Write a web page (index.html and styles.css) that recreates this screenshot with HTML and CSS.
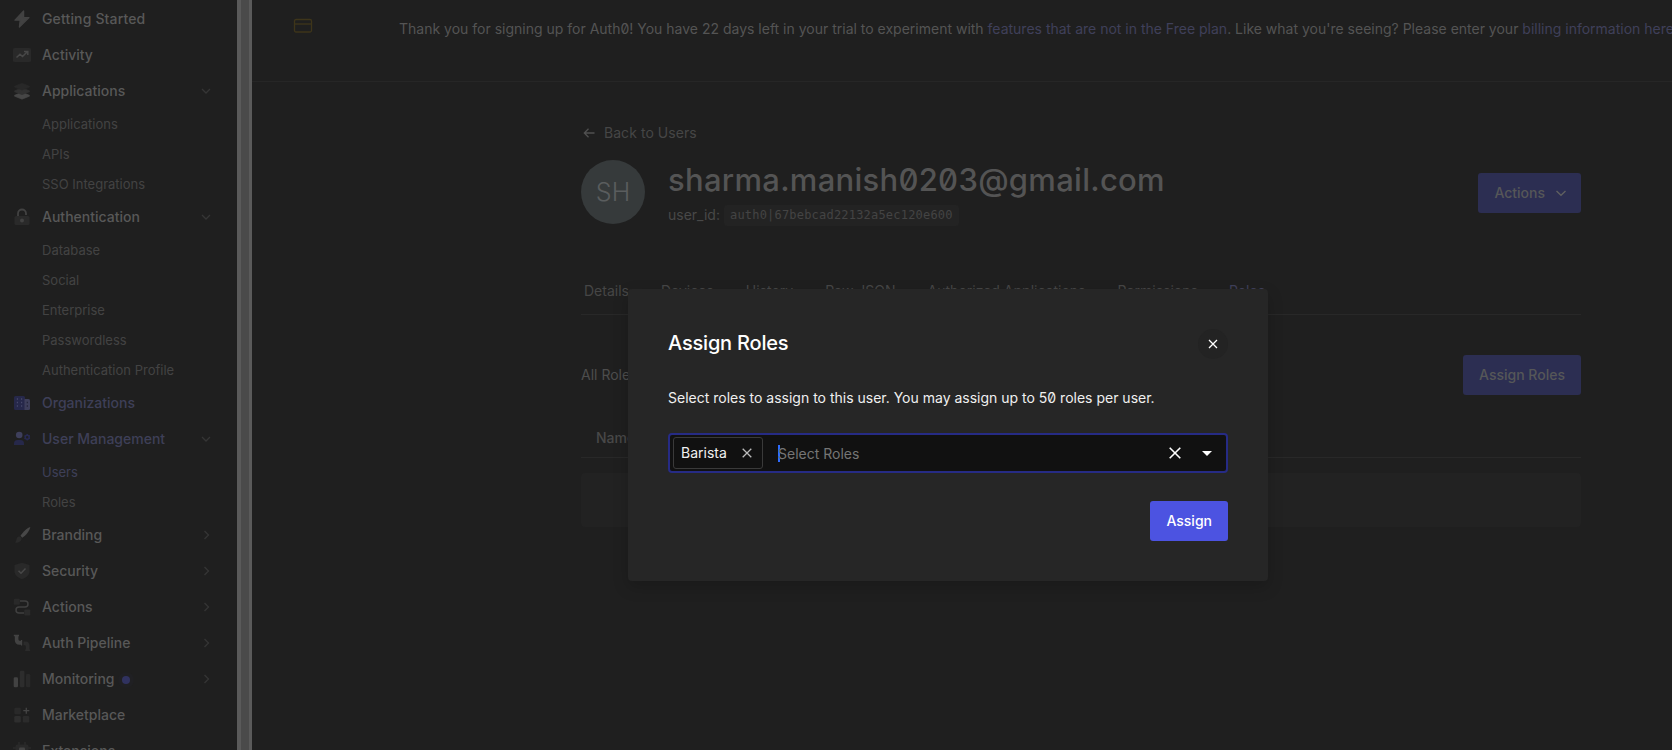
FILE: index.html
```html
<!DOCTYPE html>
<html lang="en">
<head>
<meta charset="utf-8">
<title>User Details</title>
<link rel="stylesheet" href="styles.css">
</head>
<body>
<div class="app">
  <nav class="sidebar">
    <a class="item first"><svg class="ico" viewBox="0 0 18 18"><path d="M10.6 1 2 10.2h5.2L6.4 17 16 7.6h-5.400z" fill="#424242" stroke="#424242" stroke-linejoin="round"/></svg><span>Getting Started</span></a>
    <a class="item"><svg class="ico" viewBox="0 0 18 18"><rect y="2" width="18" height="14" rx="1.500" fill="#292929"/><path d="M3.500 11.500 7 8.200l2.500 2.300 4.800-4.800M11 5.500h3.800v3.600" fill="none" stroke="#484848" stroke-width="1.500"/></svg><span>Activity</span></a>
    <a class="item"><svg class="ico" viewBox="0 0 18 18"><path d="M1.500 13.300 9 10.300l7.500 3v.9L9 17.200l-7.500-3z" fill="#464646" stroke="#464646" stroke-width=".6" stroke-linejoin="round"/><path d="M1.500 8.800 9 6l7.500 2.800v.9L9 12.700 1.500 9.700z" fill="#313131" stroke="#313131" stroke-width=".6" stroke-linejoin="round"/><path d="M1.500 4.200 9 1.200l7.500 3v.9L9 8.100l-7.500-3z" fill="#282828" stroke="#282828" stroke-width=".6" stroke-linejoin="round"/></svg><span>Applications</span><svg class="chev" viewBox="0 0 10 10"><path d="m1 3 4 4 4-4"/></svg></a>
    <a class="sub">Applications</a>
    <a class="sub">APIs</a>
    <a class="sub">SSO Integrations</a>
    <a class="item"><svg class="ico" viewBox="0 0 18 18"><path d="M5 8V5.500a4 4 0 0 1 8 0V7" fill="none" stroke="#424242" stroke-width="1.800"/><rect x="1.500" y="8" width="15" height="9" rx="1.500" fill="#2a2a2a"/><circle cx="9" cy="12.500" r="2" fill="#424242"/></svg><span>Authentication</span><svg class="chev" viewBox="0 0 10 10"><path d="m1 3 4 4 4-4"/></svg></a>
    <a class="sub">Database</a>
    <a class="sub">Social</a>
    <a class="sub">Enterprise</a>
    <a class="sub">Passwordless</a>
    <a class="sub">Authentication Profile</a>
    <a class="item active"><svg class="ico" viewBox="0 0 18 18"><path d="M2.500 2h8a1.500 1.500 0 0 1 1.500 1.500V16H2.500A1.500 1.500 0 0 1 1 14.500v-11A1.500 1.500 0 0 1 2.500 2z" fill="#26284a"/><path d="M11.500 5h4A1.500 1.500 0 0 1 17 6.500v8a1.500 1.500 0 0 1-1.500 1.500h-4z" fill="#3e3f5b"/><path d="M3.800 5H5M8 5h1.200M3.800 8.500H5M8 8.500h1.200M3.800 12H5M8 12h1.200" stroke="#46476a" stroke-width="1.300"/><path d="M13.700 8.500h1.300M13.700 12h1.300" stroke="#24253a" stroke-width="1.300"/></svg><span>Organizations</span></a>
    <a class="item active"><svg class="ico" viewBox="0 0 18 18"><circle cx="6.200" cy="5" r="3.300" fill="#3e3f5b"/><path d="M1 15v-1.500a3.500 3.500 0 0 1 3.500-3.500h3a3.500 3.500 0 0 1 3.500 3.500V15z" fill="#26284a"/><circle cx="14.200" cy="7.200" r="2" fill="none" stroke="#282a52" stroke-width="1.500"/><path d="M14.200 4v1M14.200 9.500v1M11.500 5.600l.8.500M16.100 8.300l.8.500M11.500 8.800l.8-.5M16.100 6.100l.8-.5" stroke="#282a52" stroke-width="1.300"/></svg><span>User Management</span><svg class="chev" viewBox="0 0 10 10"><path d="m1 3 4 4 4-4"/></svg></a>
    <a class="sub active">Users</a>
    <a class="sub">Roles</a>
    <a class="item"><svg class="ico" viewBox="0 0 18 18"><path d="M17.300 1C14 2 9.500 6.500 7.500 9.800l1.700 2C13 9.500 16.500 5 17.300 1z" fill="#484848"/><path d="M6.300 10.500c1.500 0 2.700 1.300 2.200 3C7.800 16 5 17 1.500 16.500c1.500-.8 1.700-1.800 2-3.300.3-1.600 1.300-2.700 2.800-2.700z" fill="#2a2a2a"/></svg><span>Branding</span><svg class="chev" viewBox="0 0 10 10"><path d="m3.500 1 4 4-4 4"/></svg></a>
    <a class="item"><svg class="ico" viewBox="0 0 18 18"><path d="M9 .8 16.500 3v6c0 4-3 6.500-7.500 8.200C4.500 15.500 1.500 13 1.500 9V3z" fill="#292929"/><path d="m5.500 8.800 2.500 2.400 4.500-4.600" fill="none" stroke="#484848" stroke-width="1.500"/></svg><span>Security</span><svg class="chev" viewBox="0 0 10 10"><path d="m3.500 1 4 4-4 4"/></svg></a>
    <a class="item"><svg class="ico" viewBox="0 0 18 18"><rect x=".8" y=".8" width="6" height="6" rx="1" fill="#292929"/><rect x="11.300" y="11.500" width="6" height="6" rx="1" fill="#2b2b2b"/><path d="M7 3h5a3 3 0 0 1 0 6H6a3 3 0 0 0 0 6h5" fill="none" stroke="#404040" stroke-width="1.500"/></svg><span>Actions</span><svg class="chev" viewBox="0 0 10 10"><path d="m3.500 1 4 4-4 4"/></svg></a>
    <a class="item"><svg class="ico" viewBox="0 0 18 18"><path d="M.8.800H6v1.500h-.6V5c0 1 .5 1.800 1.800 1.800H8V6h1.200v5.500H8v-.8H6.500C3.500 10.700 1.800 9 1.800 6V2.300h-1z" fill="#424242"/><path d="M10.500 7.500h2c2.500 0 4 1.500 4 4v4h.7v1.500h-5v-1.500h.6v-3c0-.8-.5-1.200-1.300-1.200h-1z" fill="#2b2b2b"/></svg><span>Auth Pipeline</span><svg class="chev" viewBox="0 0 10 10"><path d="m3.500 1 4 4-4 4"/></svg></a>
    <a class="item"><svg class="ico" viewBox="0 0 18 18"><rect x=".7" y="7.300" width="4.300" height="9.900" rx="1.300" fill="#424242"/><rect x="6.800" y=".8" width="4.600" height="16.400" rx="1.300" fill="#2d2d2d"/><rect x="13" y="4" width="4.300" height="13.200" rx="1.300" fill="#292929"/></svg><span>Monitoring</span><i class="dot"></i><svg class="chev" viewBox="0 0 10 10"><path d="m3.500 1 4 4-4 4"/></svg></a>
    <a class="item"><svg class="ico" viewBox="0 0 18 18"><rect x="1.300" y="1.700" width="6.500" height="6.500" rx="1.300" fill="#292929"/><rect x="1.300" y="10" width="6.500" height="6.500" rx="1.300" fill="#2e2e2e"/><rect x="9.800" y="10" width="6.500" height="6.500" rx="1.300" fill="#2b2b2b"/><path d="M13.300 1.700v6M10.300 4.700h6" stroke="#444" stroke-width="1.300"/></svg><span>Marketplace</span></a>
    <a class="item"><svg class="ico" viewBox="0 0 18 18"><path d="M6 0v4M12 0v4M0 6h4M14 6h4" stroke="#2b2b2b" stroke-width="1.500"/><rect x="2.500" y="2.500" width="13" height="13" rx="2" fill="#292929"/><rect x="6" y="5.500" width="6" height="6" rx="1" fill="#444"/></svg><span>Extensions</span></a>
  </nav>
  <div class="scrollbar"></div>
  <main class="main">
    <header class="banner">
      <svg class="card" viewBox="0 0 20 16"><rect x="1.500" y="1.500" width="17" height="12.500" rx="1.500"/><path d="M1.500 6h17"/></svg>
      <p>Thank you for signing up for Auth0! You have 22 days left in your trial to experiment with <a>features that are not in the Free plan</a>. Like what you're seeing? Please enter your <a>billing information here</a></p>
    </header>
    <section class="content">
      <a class="back"><svg viewBox="0 0 12 12"><path d="M11.500 6H1.500M5.500 1.800 1.300 6l4.200 4.200"/></svg>Back to Users</a>
      <div class="profile">
        <div class="avatar">SH</div>
        <div class="who">
          <h1>sharma.manish0203@gmail.com</h1>
          <div class="uid">user_id: <code>auth0|67bebcad22132a5ec120e600</code></div>
        </div>
        <button class="btn dim">Actions<svg viewBox="0 0 10 10"><path d="m.5 3 4.500 4.300L9.500 3"/></svg></button>
      </div>
      <div class="tabs"><a>Details</a><a>Devices</a><a>History</a><a>Raw JSON</a><a>Authorized Applications</a><a>Permissions</a><a class="active">Roles</a></div>
      <div class="toolbar"><span>All Roles</span><button class="btn dim">Assign Roles</button></div>
      <div class="thead">Name</div>
      <div class="row"></div>
    </section>
  </main>
</div>
<div class="modal">
  <div class="modal-head"><h2>Assign Roles</h2><button class="close"><svg viewBox="0 0 10 10"><path d="m1 1 8 8M9 1 1 9"/></svg></button></div>
  <p class="hint">Select roles to assign to this user. You may assign up to 50 roles per user.</p>
  <div class="select">
    <div class="chip"><span>Barista</span><svg viewBox="0 0 10 10"><path d="m.7.700 8.600 8.600M9.300.700.700 9.300"/></svg></div>
    <div class="field"><i class="caret"></i><span class="ph">Select Roles</span></div>
    <svg class="clear" viewBox="0 0 12 12"><path d="m.7.700 10.600 10.600M11.300.700.700 11.300"/></svg>
    <svg class="tri" viewBox="0 0 10 5"><path d="M0 0h10L5 5z"/></svg>
  </div>
  <button class="btn assign">Assign</button>
</div>
</body>
</html>
```
FILE: styles.css
```css
* { box-sizing: border-box; }
body {
  margin: 0;
  height: 750px;
  overflow: hidden;
  background: #1f1f1f;
  color: #545454;
  font-family: Inter, "Liberation Sans", sans-serif;
  font-size: 14px;
  line-height: 20px;
  font-feature-settings: "zero";
}
h1, h2, p { margin: 0; font-weight: 500; }
svg { display: block; flex: none; fill: none; stroke-width: 1.3; }
.app { display: flex; height: 750px; overflow: hidden; }

.sidebar { width: 237px; flex: none; padding-top: 1px; overflow: hidden; }
.item {
  display: flex;
  align-items: center;
  height: 36px;
  padding: 0 26px 0 13px;
  font-weight: 500;
  color: #585858;
}
.first { letter-spacing: 0.15px; }
.ico { width: 18px; height: 18px; margin-right: 11px; stroke: none; }
.chev { width: 10px; height: 10px; margin-left: auto; stroke: #353535; }
.sub {
  display: block;
  height: 30px;
  padding-left: 42px;
  font-size: 13px;
  line-height: 31px;
  color: #434343;
}
.item.active, .sub.active { color: #3e3f58; }
.dot { width: 8px; height: 8px; margin: 1px 0 0 8px; border-radius: 50%; background: #30325f; box-shadow: 0 0 0 4px #202023; }
.scrollbar { width: 15px; flex: none; background: #4a4a4a; border: solid #5a5a5a; border-width: 0 3px 0 4px; }

.main { flex: 1; min-width: 0; overflow: hidden; }
.banner { display: flex; height: 82px; padding: 18px 0 0 41px; border-bottom: 1px solid #262626; }
.card { width: 20px; height: 16px; stroke: #3e351a; }
.banner p { margin: 1px 0 0 86px; white-space: nowrap; font-weight: 400; }
.banner a { color: #3f405a; }
.content { width: 1000px; margin: 41px 0 0 329px; }
.back { display: flex; align-items: center; gap: 9px; height: 20px; padding-left: 2px; color: #464646; letter-spacing: 0.05px; }
.back svg { width: 12px; height: 12px; stroke: #505050; }
.profile { display: flex; margin-top: 17px; height: 64px; }
.avatar { width: 64px; height: 64px; border-radius: 50%; background: #363a3b; color: #5a5d5e; font-size: 25px; line-height: 64px; text-align: center; font-weight: 300; }
.who { flex: 1; margin-left: 23px; }
h1 { font-size: 31px; line-height: 40px; letter-spacing: 0.28px; color: #545454; }
.uid { display: flex; gap: 4px; margin-top: 5px; color: #484848; }
code { padding: 0 6px; border-radius: 3px; background: #232323; font: 12px/21px "DejaVu Sans Mono", monospace; letter-spacing: 0.2px; color: #444; }
.btn { display: flex; align-items: center; height: 40px; padding: 0 16px; border: 0; border-radius: 3px; font: inherit; font-weight: 500; }
.dim { background: #2c2e52; color: #565758; }
.profile .btn { margin-top: 13px; padding-right: 15px; }
.btn svg { width: 10px; height: 10px; margin-left: 11px; stroke: #606060; }
.tabs { display: flex; gap: 32px; height: 48px; margin-top: 43px; padding: 14px 0 0 3px; border-bottom: 1px solid #282828; color: #464646; }
.tabs .active { margin-left: -1px; color: #3f405a; }
.toolbar { display: flex; align-items: center; justify-content: space-between; height: 40px; margin-top: 40px; color: #4d4d4d; }
.thead { height: 38px; margin-top: 25px; padding: 8px 0 0 15px; border-bottom: 1px solid #282828; color: #484848; font-weight: 500; }
.row { height: 54px; margin-top: 15px; border-radius: 4px; background: #222; }

.modal { position: absolute; left: 628px; top: 289px; width: 640px; height: 292px; padding: 40px; border-radius: 4px; background: #262626; box-shadow: 0 6px 16px rgba(0, 0, 0, 0.18); color: #f0f0f0; }
.modal-head { display: flex; align-items: center; justify-content: space-between; height: 30px; }
h2 { font-size: 20px; line-height: 28px; margin-top: -2px; letter-spacing: -0.2px; color: #fff; }
.close { display: flex; align-items: center; justify-content: center; width: 30px; height: 30px; padding: 0; border: 0; border-radius: 50%; background: #232323; }
.close svg { width: 10px; height: 10px; stroke: #fff; }
.hint { margin-top: 29px; font-weight: 400; }
.select { display: flex; align-items: center; height: 40px; margin-top: 25px; padding: 0 14px 0 3px; border: 2px solid #262b85; border-radius: 4px; background: #111; }
.chip { display: flex; align-items: center; justify-content: space-between; width: 90px; height: 32px; padding: 0 10px 0 7px; border: 1px solid #3a3a3a; border-radius: 3px; }
.chip svg { width: 10px; height: 10px; stroke: #bbb; }
.field { display: flex; align-items: center; flex: 1; margin-left: 15px; }
.caret { width: 2px; height: 17px; margin-right: -2px; background: #2e6bff; }
.ph { color: #757575; margin-top: 2px; }
.clear { width: 12px; height: 12px; stroke: #fff; stroke-width: 1.6; }
.tri { width: 10px; height: 5px; margin-left: 21px; fill: #fff; }
.assign { margin: 28px 0 0 auto; background: #4c53e1; color: #fff; }
```
